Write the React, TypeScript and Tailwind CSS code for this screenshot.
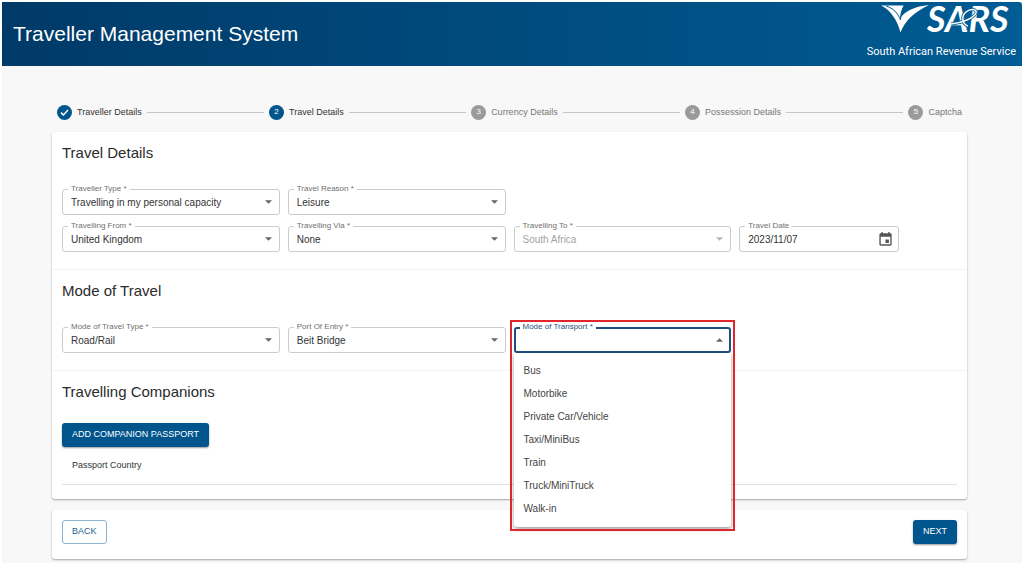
import { useState } from "react";
import type { ReactNode } from "react";
import clsx from "clsx";

const STEPS = [
  "Traveller Details",
  "Travel Details",
  "Currency Details",
  "Possession Details",
  "Captcha",
];

const TRANSPORT_MODES = [
  "Bus",
  "Motorbike",
  "Private Car/Vehicle",
  "Taxi/MiniBus",
  "Train",
  "Truck/MiniTruck",
  "Walk-in",
];

const ACTIVE_STEP = 1;

function Logo() {
  return (
    <div className="flex flex-col items-end self-start pt-[2px] text-white">
      <svg width="136" height="40" viewBox="0 0 136 40" className="overflow-visible" role="img" aria-label="SARS">
        {/* bird */}
        <path
          fill="#fff"
          d="M1 1.500 H24 C21.500 6 20.500 10 20.500 15 C22 10 30 3 49 1 C34 8 25 17 20.500 28.500 C17.500 17 11 6 1 1.500 Z"
        />
        <path fill="none" stroke="#005a91" strokeWidth="1" d="M6 2 C13 4 18 9 20.500 16" />
        <path fill="none" stroke="#005a91" strokeWidth="1" d="M24.500 1 C22 5 20.500 10 20.500 16" />
        <text x="47" y="28" fill="#fff" fontSize="36" fontStyle="italic" fontWeight="700" fontFamily="Lato, sans-serif">
          SARS
        </text>
        {/* ribbon looping round the middle letters */}
        <path
          fill="none"
          stroke="#005a91"
          strokeWidth="3"
          d="M71 20 C82 19 94 14 96 9 C97 5 91 4 86 8 C81 12 82 20 88 22"
        />
        <path
          fill="none"
          stroke="#fff"
          strokeWidth="1.500"
          d="M71 20 C82 19 94 14 96 9 C97 5 91 4 86 8 C81 12 82 20 88 22"
        />
      </svg>
      <p className="font-[Roboto,sans-serif] text-[11px] leading-4">South African Revenue Service</p>
    </div>
  );
}

function Stepper() {
  return (
    <ol className="flex items-center gap-[5px] px-[5px]">
      {STEPS.map((step, i) => (
        <li key={step} className={clsx("flex items-center gap-[5px]", i < STEPS.length - 1 && "flex-auto")}>
          <span
            className={clsx(
              "flex size-[15px] shrink-0 items-center justify-center rounded-full text-[8px] text-white",
              i <= ACTIVE_STEP ? "bg-[#00558c]" : "bg-[#9a9a9a]"
            )}
          >
            {i < ACTIVE_STEP ? (
              <svg width="11" height="11" viewBox="0 0 11 11" fill="none" stroke="#fff" strokeWidth="1.5">
                <path d="M2 5.6 4.4 8 9 3" />
              </svg>
            ) : (
              i + 1
            )}
          </span>
          <span
            className={clsx(
              "text-[9px] leading-4 whitespace-nowrap",
              i <= ACTIVE_STEP ? "text-[#333]" : "text-[#777]"
            )}
          >
            {step}
          </span>
          {i < STEPS.length - 1 && <span className="h-px flex-1 bg-[#c6c6c6]" />}
        </li>
      ))}
    </ol>
  );
}

function Section({ title, children }: { title: string; children: ReactNode }) {
  return (
    <section className="border-b border-[#f3f3f3] px-[10px] pt-[11px] pb-[17px] last:border-b-0 last:pb-[14px]">
      <h2 className="text-[15px] leading-5 text-[#2b2b2b]">{title}</h2>
      {children}
    </section>
  );
}

function FieldLabel({ id, active, children }: { id: string; active?: boolean; children: ReactNode }) {
  return (
    <label
      htmlFor={id}
      className={clsx(
        "absolute -top-[5px] left-[6px] bg-white px-[3px] text-[8px] leading-[10px] whitespace-nowrap",
        active ? "text-[#1f4f80]" : "text-[#707070]"
      )}
    >
      {children}
    </label>
  );
}

function Caret({ up, faded }: { up?: boolean; faded?: boolean }) {
  return (
    <svg
      width="7"
      height="4"
      viewBox="0 0 8 4"
      className={clsx("pointer-events-none absolute top-[11px] right-2", faded ? "fill-[#b5b5b5]" : "fill-[#666]")}
      aria-hidden="true"
    >
      <path d={up ? "M0 4 4 0 8 4Z" : "M0 0 4 4 8 0Z"} />
    </svg>
  );
}

function SelectField({ id, label, value, disabled }: { id: string; label: string; value: string; disabled?: boolean }) {
  return (
    <div className="relative">
      <select
        id={id}
        defaultValue={value}
        disabled={disabled}
        className="block h-[26px] w-full appearance-none rounded-[3px] border border-[#cccccc] bg-white pr-6 pl-2 text-[10px] text-[#333] disabled:text-[#a3a3a3] disabled:opacity-100"
      >
        <option>{value}</option>
      </select>
      <FieldLabel id={id}>{label} *</FieldLabel>
      <Caret faded={disabled} />
    </div>
  );
}

function TransportField() {
  const [open, setOpen] = useState(true);
  const [mode, setMode] = useState("");

  const pick = (m: string) => {
    setMode(m);
    setOpen(false);
  };

  return (
    <div className="relative">
      <select
        id="transport"
        value={mode}
        onChange={(e) => pick(e.target.value)}
        onMouseDown={(e) => {
          e.preventDefault();
          setOpen(!open);
        }}
        className="block h-[26px] w-full appearance-none rounded-[3px] border-2 border-[#1f4f80] bg-white pr-6 pl-2 text-[10px] text-[#333] outline-none"
      >
        <option value=""></option>
        {TRANSPORT_MODES.map((m) => (
          <option key={m}>{m}</option>
        ))}
      </select>
      <FieldLabel id="transport" active>
        Mode of Transport *
      </FieldLabel>
      <Caret up={open} />
      {open && (
        <>
          <ul
            role="listbox"
            aria-label="Mode of Transport"
            className="absolute top-full right-0 left-0 z-10 rounded-b-[3px] bg-white pt-[6px] pb-[7px] shadow-[0_2px_4px_rgba(0,0,0,0.4)]"
          >
            {TRANSPORT_MODES.map((m) => (
              <li
                key={m}
                role="option"
                aria-selected={m === mode}
                onClick={() => pick(m)}
                className="cursor-pointer px-[10px] text-[10px] leading-[23px] text-[#444] hover:bg-gray-100"
              >
                {m}
              </li>
            ))}
          </ul>
          {/* highlight frame around the field and its open menu */}
          <div className="pointer-events-none absolute -top-[7px] -right-1 -left-1 z-20 h-[211px] border-2 border-[#e0262b]" />
        </>
      )}
    </div>
  );
}

function DateField() {
  return (
    <div className="relative w-40">
      <input
        id="travel-date"
        type="text"
        defaultValue="2023/11/07"
        className="block h-[26px] w-full rounded-[3px] border border-[#cccccc] bg-white pr-7 pl-2 text-[10px] text-[#333]"
      />
      <FieldLabel id="travel-date">Travel Date</FieldLabel>
      <button type="button" aria-label="Choose date" className="absolute top-[6px] right-[6px]">
        <svg width="15" height="15" viewBox="2 1 20 22" fill="#555" aria-hidden="true">
          <path d="M17 12h-5v5h5v-5zM16 1v2H8V1H6v2H5c-1.11 0-1.99.9-1.99 2L3 19c0 1.1.89 2 2 2h14c1.1 0 2-.9 2-2V5c0-1.1-.9-2-2-2h-1V1h-2zm3 18H5V8h14v11z" />
        </svg>
      </button>
    </div>
  );
}

export default function App() {
  return (
    <div className="min-h-screen bg-white p-[2px] pb-[7px] font-['Liberation_Sans',Arial,sans-serif]">
      <div className="bg-[#f8f8f8] pb-1">
        <header className="flex h-16 items-center justify-between rounded-tr-[3px] bg-linear-to-r from-[#003a68] to-[#005c94] pr-[6px] pl-[11px]">
          <h1 className="text-[21px] leading-8 text-white">Traveller Management System</h1>
          <Logo />
        </header>

        <main className="pt-[38px] pr-[55px] pl-[50px]">
          <Stepper />

          <div className="mt-3 rounded-[3px] bg-white shadow-[0_1px_2px_rgba(0,0,0,0.35)]">
            <Section title="Travel Details">
              <div className="mt-[26px] grid grid-cols-4 gap-x-2 gap-y-[11px]">
                <SelectField id="type" label="Traveller Type" value="Travelling in my personal capacity" />
                <SelectField id="reason" label="Travel Reason" value="Leisure" />
                <div className="col-span-2" />
                <SelectField id="from" label="Travelling From" value="United Kingdom" />
                <SelectField id="via" label="Travelling Via" value="None" />
                <SelectField id="to" label="Travelling To" value="South Africa" disabled />
                <DateField />
              </div>
            </Section>

            <Section title="Mode of Travel">
              <div className="mt-[26px] grid grid-cols-4 gap-x-2">
                <SelectField id="mode" label="Mode of Travel Type" value="Road/Rail" />
                <SelectField id="port" label="Port Of Entry" value="Beit Bridge" />
                <TransportField />
              </div>
            </Section>

            <Section title="Travelling Companions">
              <button
                type="button"
                className="mt-[21px] block h-6 rounded-[3px] bg-[#00558c] px-[10px] text-[9px] text-white shadow-[0_1px_2px_rgba(0,0,0,0.4)]"
              >
                ADD COMPANION PASSPORT
              </button>
              <table className="w-full text-left text-[9px] text-[#333]">
                <thead>
                  <tr className="border-b border-[#e0e0e0]">
                    <th className="px-[10px] pt-[10px] pb-[11px] leading-4 font-normal">Passport Country</th>
                  </tr>
                </thead>
              </table>
            </Section>
          </div>

          <div className="mt-[11px] flex justify-between rounded-[3px] bg-white px-[10px] pt-[10px] pb-[15px] shadow-[0_1px_2px_rgba(0,0,0,0.35)]">
            <button
              type="button"
              className="h-6 rounded-[3px] border border-[#8fb2cd] px-[9px] text-[9px] text-[#1f5f92]"
            >
              BACK
            </button>
            <button
              type="button"
              className="h-6 rounded-[3px] bg-[#00558c] px-[10px] text-[9px] text-white shadow-[0_1px_2px_rgba(0,0,0,0.4)]"
            >
              NEXT
            </button>
          </div>
        </main>
      </div>
    </div>
  );
}
